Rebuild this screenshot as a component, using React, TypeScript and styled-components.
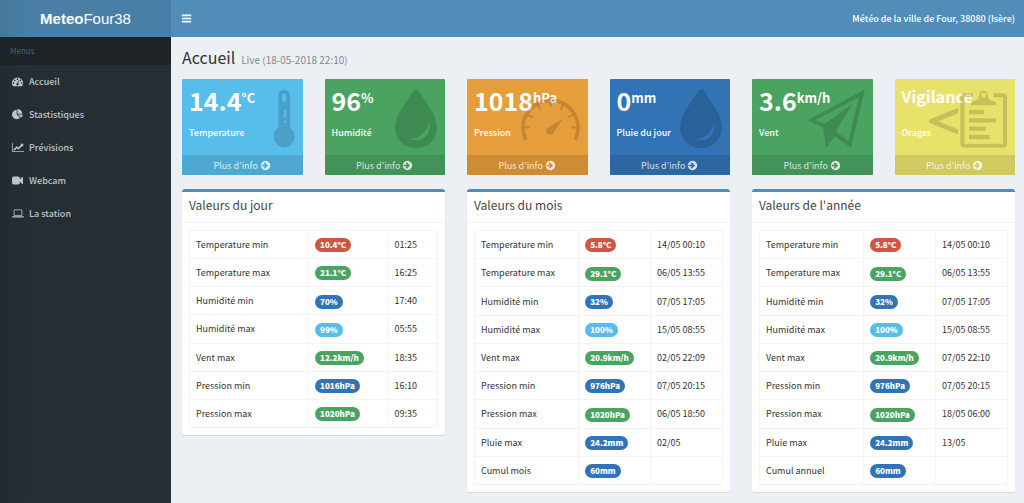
import React from "react";
import styled, { createGlobalStyle } from "styled-components";

const GlobalStyle = createGlobalStyle`
  *, *::before, *::after { box-sizing: border-box; }
  body {
    margin: 0;
    background: #ecf0f5;
    color: #333;
    font-family: "Source Sans Pro", "Noto Sans CJK JP", "Noto Sans", sans-serif;
    font-size: 9px;
    line-height: 15px;
  }
  a { color: inherit; text-decoration: none; }
`;

/* ---------- page frame ---------- */

const Shell = styled.div`
  display: grid;
  grid-template-columns: 171px 1fr;
  grid-template-rows: 37px 1fr;
  min-height: 100vh;
`;

const Logo = styled.a`
  display: flex;
  align-items: center;
  justify-content: center;
  background: linear-gradient(to right, #45789b, #497fa6 30px);
  color: #fff;
  font-family: "Liberation Sans", Arial, sans-serif;
  font-size: 15px;
  font-weight: 400;
`;

const TopBar = styled.header`
  display: flex;
  align-items: center;
  justify-content: space-between;
  padding: 0 9px 0 10px;
  background: #528dba;
  color: #fff;
`;

const ToggleButton = styled.button`
  display: flex;
  padding: 0;
  border: 0;
  background: none;
  color: inherit;
  cursor: pointer;
`;

const City = styled.span`
  font-weight: 500;
`;

const Sidebar = styled.aside`
  background: linear-gradient(to right, #232b2f, #262e34 30px);
  color: #b8c7ce;
`;

const MenuTitle = styled.div`
  padding: 6px 10px 7px;
  background: #1d2326;
  color: #4b646f;
  font-size: 8px;
`;

const MenuList = styled.ul`
  margin: 0;
  padding: 0;
  list-style: none;
`;

const MenuLink = styled.a`
  display: flex;
  align-items: center;
  gap: 5px;
  height: 33px;
  padding: 0 12px;
  font-weight: 500;
`;

const MenuIcon = styled.span`
  display: flex;
  width: 12px;
`;

const Content = styled.main`
  padding: 10px 9px 10px 11px;
`;

const PageTitle = styled.h1`
  display: flex;
  align-items: baseline;
  gap: 6px;
  margin: 0 0 9px;
  font-size: 16px;
  font-weight: 400;
  line-height: 20px;
`;

const Live = styled.small`
  color: #888;
  font-size: 10px;
`;

/* ---------- summary cards ---------- */

const CardGrid = styled.section`
  display: grid;
  grid-template-columns: repeat(6, 1fr);
  gap: 22px;
  margin-bottom: 14px;
`;

const CardBox = styled.article<{ $color: string }>`
  position: relative;
  display: flex;
  flex-direction: column;
  justify-content: space-between;
  height: 96px;
  border-radius: 1px;
  background: ${(p) => p.$color};
  color: #fff;
`;

const CardBody = styled.div`
  padding: 6px 7px 0;
`;

const CardValue = styled.h2<{ $small?: boolean }>`
  margin: 0 0 10px;
  font-size: ${(p) => (p.$small ? 16 : 25)}px;
  font-weight: 700;
  line-height: ${(p) => (p.$small ? 22 : 30)}px;
  height: 30px;
  white-space: nowrap;

  sup {
    position: relative;
    top: -8px;
    font-size: 13px;
    line-height: 0;
    vertical-align: baseline;
  }
`;

const CardLabel = styled.p`
  margin: 0;
  font-weight: 500;
`;

const CardIcon = styled.span`
  position: absolute;
  top: 10px;
  right: 8px;
  display: flex;
  align-items: center;
  height: 59px;
  color: rgba(0, 0, 0, 0.15);
`;

const CardLink = styled.a`
  display: flex;
  align-items: center;
  justify-content: center;
  gap: 2px;
  height: 20px;
  background: rgba(0, 0, 0, 0.1);
  color: rgba(255, 255, 255, 0.8);
`;

/* ---------- value panels ---------- */

const PanelGrid = styled.section`
  display: grid;
  grid-template-columns: repeat(3, 1fr);
  align-items: start;
  gap: 22px;
`;

const PanelBox = styled.article`
  border-top: 3px solid #528dba;
  border-radius: 3px;
  background: #fff;
  box-shadow: 0 1px 1px rgba(0, 0, 0, 0.1);
`;

const PanelTitle = styled.h3`
  margin: 0;
  padding: 5px 7px 9px;
  border-bottom: 1px solid #f4f4f4;
  color: #444;
  font-size: 12px;
  font-weight: 400;
  line-height: 16px;
`;

const PanelBody = styled.div`
  padding: 7px;
`;

const Table = styled.table<{ $rows: number }>`
  width: 100%;
  height: ${(p) => Math.round((p.$rows * 85) / 3)}px;
  border-collapse: collapse;
  table-layout: fixed;
`;

const Cell = styled.td`
  padding: 0 6px;
  border: 1px solid #f4f4f4;
  text-align: left;
  font-weight: 400;
  white-space: nowrap;
`;

const tones = {
  red: "#d15544",
  green: "#4ba361",
  blue: "#3173b4",
  aqua: "#57bdea",
};

const Badge = styled.span<{ $tone: keyof typeof tones }>`
  display: inline-block;
  padding: 0 5px;
  border-radius: 7px;
  background: ${(p) => tones[p.$tone]};
  color: #fff;
  font-size: 8px;
  font-weight: 900;
  line-height: 14px;
  vertical-align: middle;
`;

/* ---------- icons ---------- */

type GlyphProps = { d: string; box?: number; width: number; height?: number };

const Glyph = ({ d, box = 1792, width, height = 11 }: GlyphProps) => (
  <svg width={width} height={height} viewBox={`0 0 ${box} 1792`} fill="currentColor" aria-hidden="true">
    <path d={d} />
  </svg>
);

const bars =
  "M1664 1344v128q0 26-19 45t-45 19h-1408q-26 0-45-19t-19-45v-128q0-26 19-45t45-19h1408q26 0 45 19t19 45zm0-512v128q0 26-19 45t-45 19h-1408q-26 0-45-19t-19-45v-128q0-26 19-45t45-19h1408q26 0 45 19t19 45zm0-512v128q0 26-19 45t-45 19h-1408q-26 0-45-19t-19-45v-128q0-26 19-45t45-19h1408q26 0 45 19t19 45z";
const arrowCircle =
  "M1285 896q0-27-18-45l-91-91-362-362q-18-18-45-18t-45 18l-91 91q-18 18-18 45t18 45l189 189h-502q-26 0-45 19t-19 45v128q0 26 19 45t45 19h502l-189 189q-19 19-19 45t19 45l91 91q18 18 45 18t45-18l362-362 91-91q18-18 18-45zm379 0q0 209-103 385.5t-279.5 279.5-385.5 103-385.5-103-279.5-279.5-103-385.5 103-385.5 279.5-279.5 385.5-103 385.5 103 279.5 279.5 103 385.5z";
const dashboard =
  "M384 1152q0-53-37.5-90.5t-90.5-37.5-90.5 37.5-37.5 90.5 37.5 90.5 90.5 37.5 90.5-37.5 37.5-90.5zm192-448q0-53-37.5-90.5t-90.5-37.5-90.5 37.5-37.5 90.5 37.5 90.5 90.5 37.5 90.5-37.5 37.5-90.5zm428 481l101-382q6-26-7.5-48.5t-38.5-29.5-48 6.5-30 39.5l-101 382q-60 5-107 43.5t-63 98.5q-20 77 20 146t117 89 146-20 89-117q16-60-6-117t-72-91zm660-33q0-53-37.5-90.5t-90.5-37.5-90.5 37.5-37.5 90.5 37.5 90.5 90.5 37.5 90.5-37.5 37.5-90.5zm-640-640q0-53-37.5-90.5t-90.5-37.5-90.5 37.5-37.5 90.5 37.5 90.5 90.5 37.5 90.5-37.5 37.5-90.5zm448 192q0-53-37.5-90.5t-90.5-37.5-90.5 37.5-37.5 90.5 37.5 90.5 90.5 37.5 90.5-37.5 37.5-90.5zm320 448q0 261-141 483-19 29-54 29h-1402q-35 0-54-29-141-221-141-483 0-182 71-348t191-286 286-191 348-71 348 71 286 191 191 286 71 348z";
const pieChart =
  "M768 890l546 546q-106 108-247.5 168t-298.5 60q-209 0-385.5-103t-279.5-279.5-103-385.5 103-385.5 279.5-279.5 385.5-103v762zm187 6h773q0 157-60 298.5t-168 247.5zm709-128h-768v-768q209 0 385.5 103t279.5 279.5 103 385.5z";
const lineChart =
  "M2048 1536v128h-2048v-1536h128v1408h1920zm-128-1248v435q0 21-19.5 29.5t-35.5-7.5l-121-121-633 633q-10 10-23 10t-23-10l-233-233-416 416-192-192 585-585q10-10 23-10t23 10l233 233 464-464-121-121q-16-16-7.5-35.5t29.5-19.5h435q14 0 23 9t9 23z";
const videoCamera =
  "M1792 352v1088q0 42-39 59-13 5-25 5-27 0-45-19l-403-403v166q0 119-84.5 203.5t-203.5 84.5h-704q-119 0-203.5-84.5t-84.5-203.5v-704q0-119 84.5-203.5t203.5-84.5h704q119 0 203.5 84.5t84.5 203.5v165l403-402q18-19 45-19 12 0 25 5 39 17 39 59z";
const laptop =
  "M416 1280q-66 0-113-47t-47-113v-704q0-66 47-113t113-47h1088q66 0 113 47t47 113v704q0 66-47 113t-113 47h-1088zm-32-864v704q0 13 9.5 22.5t22.5 9.5h1088q13 0 22.5-9.5t9.5-22.5v-704q0-13-9.5-22.5t-22.5-9.5h-1088q-13 0-22.5 9.5t-9.5 22.5zm1376 928h160v96q0 40-47 68t-113 28h-1600q-66 0-113-28t-47-68v-96h1760zm-720 96q16 0 16-16t-16-16h-160q-16 0-16 16t16 16h160z";

const Thermometer = () => (
  <svg width="21" height="59" viewBox="0 0 64 176" fill="currentColor" fillRule="evenodd" aria-hidden="true">
    <path d="M13 18a18 18 0 0 1 36 0v99a32 32 0 1 1-36 0zM25 16v18q0 4 6 4t6-4V16q0-4-6-4t-6 4zM31 63v24h6V63zM31 95v6h6v-6z" />
  </svg>
);

const Drop = () => (
  <svg width="42" height="59" viewBox="0 0 125 176" fill="currentColor" fillRule="evenodd" aria-hidden="true">
    <path d="M63 0c-4 0-7 3-10 8C35 38 0 75 0 113c0 36 28 63 63 63s62-27 62-63c0-38-35-75-52-105C70 3 67 0 63 0zM101 99C112 130 80 165 47 149C75 147 95 128 101 99z" />
  </svg>
);

const Gauge = () => (
  <svg width="59" height="42" viewBox="0 0 176 125" fill="none" stroke="currentColor" aria-hidden="true">
    <path strokeWidth="11" d="M14 124A82 82 0 1 1 162 124" />
    <path
      strokeWidth="6"
      d="M11 88H26M165 88H150M21 50l14 8M155 50l-14 8M50 21l8 14M126 21l-8 14M88 11V26"
    />
    <path stroke="none" fill="currentColor" d="M125 62L98 102A12 12 0 1 1 82 87z" />
  </svg>
);

const Plane = () => (
  <svg width="58" height="59" viewBox="0 0 174 176" fill="currentColor" fillRule="evenodd" aria-hidden="true">
    <path d="M174 0L0 94L48 114L57 176L83 141L132 176zM155 26L124 156L87 125L137 44L54 103L24 93z" />
  </svg>
);

const Clipboard = () => (
  <svg width="78" height="59" viewBox="0 0 234 176" fill="currentColor" aria-hidden="true">
    <path d="M87 56L0 92v9l87 35v-16L28 96l59-23z" />
    <path
      fill="none"
      stroke="currentColor"
      strokeWidth="12"
      d="M132 18H106q-6 0-6 6V164q0 6 6 6H222q6 0 6-6V24q0-6-6-6H194"
    />
    <path
      fillRule="evenodd"
      d="M125 48q1-12 12-13q12-2 13-17a14 18 0 0 1 27 0q1 15 13 17q11 1 12 13zM163 11a7 7 0 1 0 1 0z"
    />
    <path d="M120 62h44v13h-44zM120 87h82v13h-82zM120 112h50v13h-50zM120 137h62v13h-62z" />
  </svg>
);

/* ---------- data ---------- */

const menu = [
  { label: "Accueil", icon: <Glyph d={dashboard} width={11} /> },
  { label: "Stastistiques", icon: <Glyph d={pieChart} width={11} /> },
  { label: "Prévisions", icon: <Glyph d={lineChart} box={2048} width={12} /> },
  { label: "Webcam", icon: <Glyph d={videoCamera} width={11} /> },
  { label: "La station", icon: <Glyph d={laptop} box={1920} width={12} /> },
];

const cards = [
  { value: "14.4", unit: "°C", label: "Temperature", color: "#57bdea", icon: <Thermometer /> },
  { value: "96", unit: "%", label: "Humidité", color: "#4ba361", icon: <Drop /> },
  { value: "1018", unit: "hPa", label: "Pression", color: "#e69e3c", icon: <Gauge /> },
  { value: "0", unit: "mm", label: "Pluie du jour", color: "#3173b4", icon: <Drop /> },
  { value: "3.6", unit: "km/h", label: "Vent", color: "#4ba361", icon: <Plane /> },
  { value: "Vigilance", label: "Orages", color: "#e9e26a", icon: <Clipboard /> },
];

type Row = [label: string, value: string, tone: keyof typeof tones, time: string];

const panels: { title: string; columns: string[]; rows: Row[] }[] = [
  {
    title: "Valeurs du jour",
    columns: ["48%", "32%", "20%"],
    rows: [
      ["Temperature min", "10.4°C", "red", "01:25"],
      ["Temperature max", "21.1°C", "green", "16:25"],
      ["Humidité min", "70%", "blue", "17:40"],
      ["Humidité max", "99%", "aqua", "05:55"],
      ["Vent max", "12.2km/h", "green", "18:35"],
      ["Pression min", "1016hPa", "blue", "16:10"],
      ["Pression max", "1020hPa", "green", "09:35"],
    ],
  },
  {
    title: "Valeurs du mois",
    columns: ["42%", "29%", "29%"],
    rows: [
      ["Temperature min", "5.8°C", "red", "14/05 00:10"],
      ["Temperature max", "29.1°C", "green", "06/05 13:55"],
      ["Humidité min", "32%", "blue", "07/05 17:05"],
      ["Humidité max", "100%", "aqua", "15/05 08:55"],
      ["Vent max", "20.9km/h", "green", "02/05 22:09"],
      ["Pression min", "976hPa", "blue", "07/05 20:15"],
      ["Pression max", "1020hPa", "green", "06/05 18:50"],
      ["Pluie max", "24.2mm", "blue", "02/05"],
      ["Cumul mois", "60mm", "blue", ""],
    ],
  },
  {
    title: "Valeurs de l'année",
    columns: ["42%", "29%", "29%"],
    rows: [
      ["Temperature min", "5.8°C", "red", "14/05 00:10"],
      ["Temperature max", "29.1°C", "green", "06/05 13:55"],
      ["Humidité min", "32%", "blue", "07/05 17:05"],
      ["Humidité max", "100%", "aqua", "15/05 08:55"],
      ["Vent max", "20.9km/h", "green", "07/05 22:10"],
      ["Pression min", "976hPa", "blue", "07/05 20:15"],
      ["Pression max", "1020hPa", "green", "18/05 06:00"],
      ["Pluie max", "24.2mm", "blue", "13/05"],
      ["Cumul annuel", "60mm", "blue", ""],
    ],
  },
];

export default function App() {
  return (
    <>
      <GlobalStyle />
      <Shell>
        <Logo href="#">
          <b>Meteo</b>Four38
        </Logo>
        <TopBar>
          <ToggleButton type="button" aria-label="Menu">
            <Glyph d={bars} width={11} />
          </ToggleButton>
          <City>Météo de la ville de Four, 38080 (Isère)</City>
        </TopBar>
        <Sidebar>
          <MenuTitle>Menus</MenuTitle>
          <nav>
            <MenuList>
              {menu.map((item) => (
                <li key={item.label}>
                  <MenuLink href="#">
                    <MenuIcon>{item.icon}</MenuIcon>
                    {item.label}
                  </MenuLink>
                </li>
              ))}
            </MenuList>
          </nav>
        </Sidebar>
        <Content>
          <PageTitle>
            Accueil <Live>Live (18-05-2018 22:10)</Live>
          </PageTitle>
          <CardGrid>
            {cards.map((card) => (
              <CardBox key={card.label} $color={card.color}>
                <CardBody>
                  <CardValue $small={!card.unit}>
                    {card.value}
                    {card.unit && <sup>{card.unit}</sup>}
                  </CardValue>
                  <CardLabel>{card.label}</CardLabel>
                </CardBody>
                <CardIcon>{card.icon}</CardIcon>
                <CardLink href="#">
                  Plus d'info <Glyph d={arrowCircle} width={11} />
                </CardLink>
              </CardBox>
            ))}
          </CardGrid>
          <PanelGrid>
            {panels.map((panel) => (
              <PanelBox key={panel.title}>
                <PanelTitle>{panel.title}</PanelTitle>
                <PanelBody>
                  <Table $rows={panel.rows.length} aria-label={panel.title}>
                    <colgroup>
                      {panel.columns.map((width, i) => (
                        <col key={i} style={{ width }} />
                      ))}
                    </colgroup>
                    <tbody>
                      {panel.rows.map(([label, value, tone, time]) => (
                        <tr key={label}>
                          <Cell as="th" scope="row">
                            {label}
                          </Cell>
                          <Cell>
                            <Badge $tone={tone}>{value}</Badge>
                          </Cell>
                          <Cell>{time}</Cell>
                        </tr>
                      ))}
                    </tbody>
                  </Table>
                </PanelBody>
              </PanelBox>
            ))}
          </PanelGrid>
        </Content>
      </Shell>
    </>
  );
}
